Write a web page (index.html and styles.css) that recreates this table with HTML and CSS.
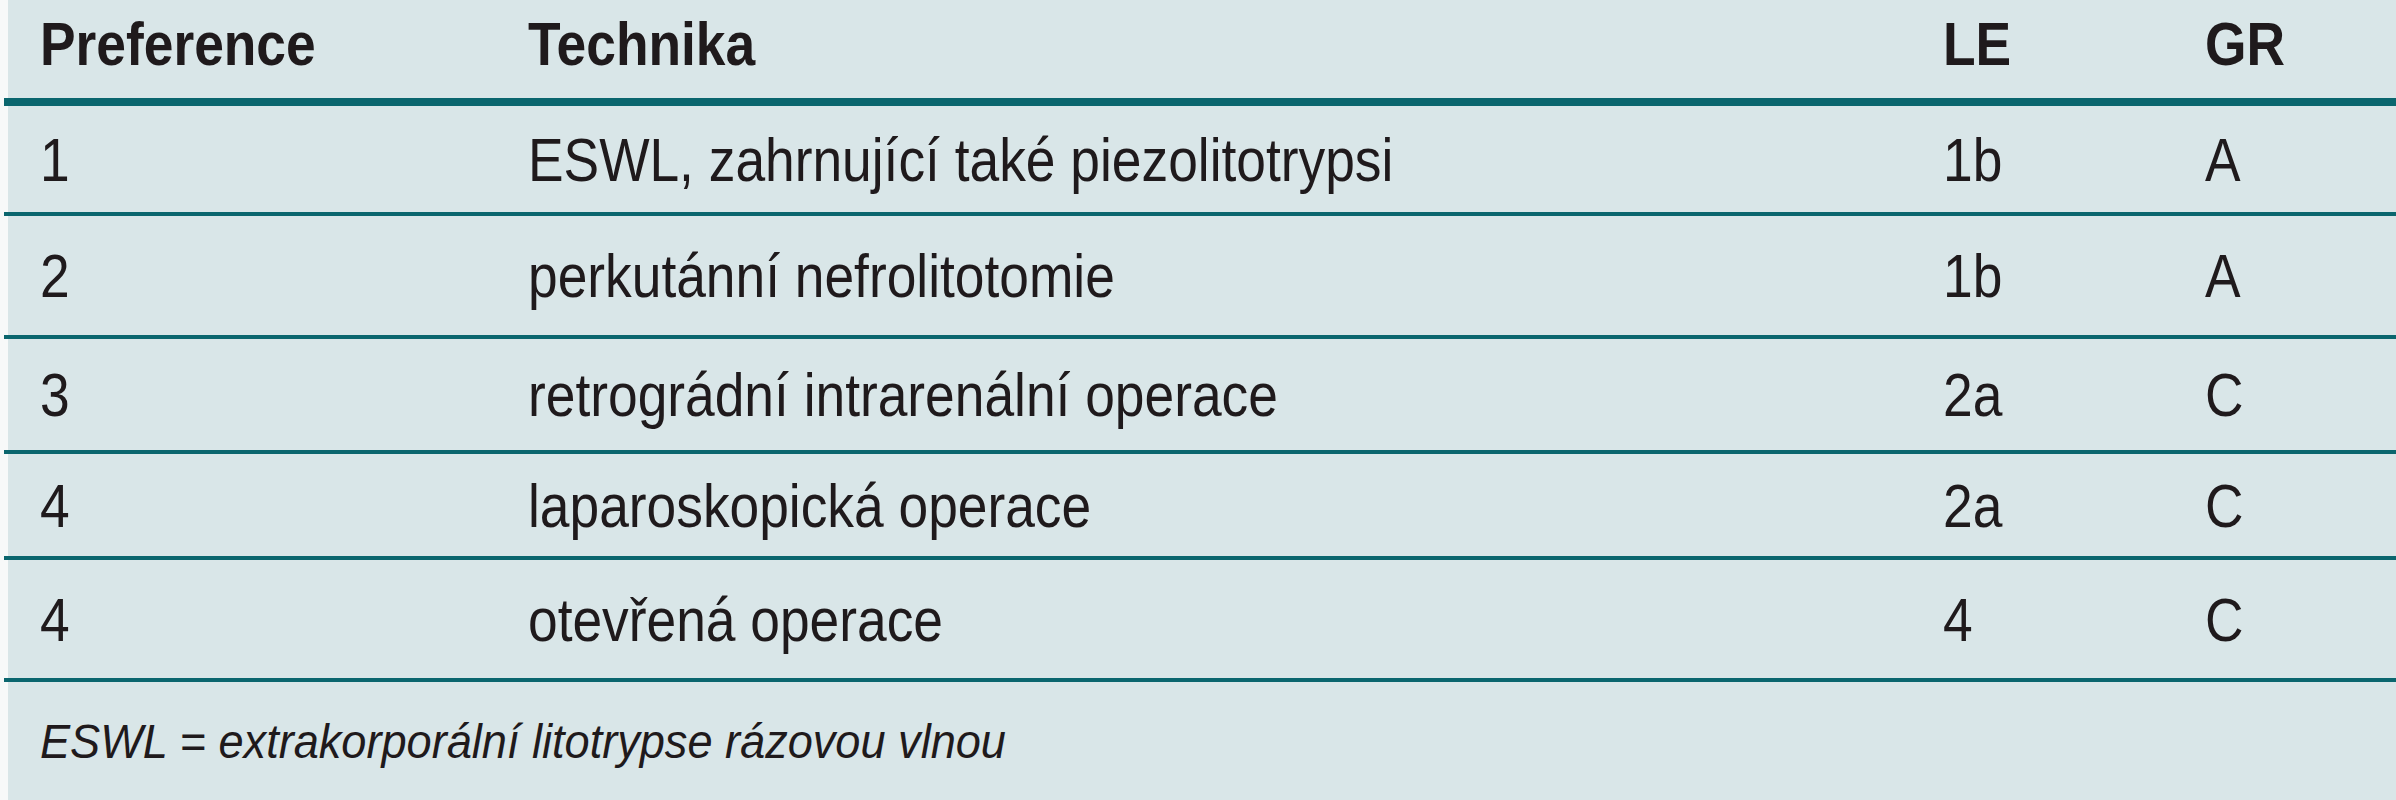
FILE: index.html
```html
<!DOCTYPE html>
<html lang="cs">
<head>
<meta charset="utf-8">
<title>Preference technik</title>
<link rel="stylesheet" href="styles.css">
</head>
<body>
<div class="table">
  <div class="row head">
    <div class="cell"><span class="t">Preference</span></div>
    <div class="cell"><span class="t">Technika</span></div>
    <div class="cell"><span class="t">LE</span></div>
    <div class="cell"><span class="t">GR</span></div>
  </div>
  <div class="row r1">
    <div class="cell"><span class="t">1</span></div>
    <div class="cell"><span class="t">ESWL, zahrnující také piezolitotrypsi</span></div>
    <div class="cell"><span class="t">1b</span></div>
    <div class="cell"><span class="t">A</span></div>
  </div>
  <div class="row r2">
    <div class="cell"><span class="t">2</span></div>
    <div class="cell"><span class="t">perkutánní nefrolitotomie</span></div>
    <div class="cell"><span class="t">1b</span></div>
    <div class="cell"><span class="t">A</span></div>
  </div>
  <div class="row r3">
    <div class="cell"><span class="t">3</span></div>
    <div class="cell"><span class="t">retrográdní intrarenální operace</span></div>
    <div class="cell"><span class="t">2a</span></div>
    <div class="cell"><span class="t">C</span></div>
  </div>
  <div class="row r4">
    <div class="cell"><span class="t">4</span></div>
    <div class="cell"><span class="t">laparoskopická operace</span></div>
    <div class="cell"><span class="t">2a</span></div>
    <div class="cell"><span class="t">C</span></div>
  </div>
  <div class="row r5">
    <div class="cell"><span class="t">4</span></div>
    <div class="cell"><span class="t">otevřená operace</span></div>
    <div class="cell"><span class="t">4</span></div>
    <div class="cell"><span class="t">C</span></div>
  </div>
  <div class="foot"><span class="ft">ESWL = extrakorporální litotrypse rázovou vlnou</span></div>
</div>
</body>
</html>
```

FILE: styles.css
```css
html, body {
  margin: 0;
  padding: 0;
  background: #f7f9f9;
}

.table {
  margin-left: 4px;
  height: 800px;
  font-family: "Liberation Sans", Arial, sans-serif;
  font-size: 62px;
  color: #1f1a1c;
  display: flex;
  flex-direction: column;
}

.row {
  display: grid;
  grid-template-columns: 488px 1415px 262px 1fr;
  align-items: center;
  padding-left: 36px;
  background: linear-gradient(to right, transparent 4px, #d9e6e8 4px);
  border-bottom: 4px solid #0a666e;
  white-space: nowrap;
}

.t {
  display: inline-block;
  transform: scaleX(0.86);
  transform-origin: left center;
}

.head {
  height: 86px;
  padding-bottom: 12px;
  border-bottom-width: 8px;
  font-weight: bold;
}

.r1 { height: 106px; }
.r2 { height: 119px; }
.r3 { height: 111px; }
.r4 { height: 102px; }
.r5 { height: 118px; }

.foot {
  flex: 1;
  display: flex;
  align-items: center;
  padding-left: 36px;
  background: linear-gradient(to right, transparent 4px, #d9e6e8 4px);
  font-style: italic;
  font-size: 48px;
  white-space: nowrap;
}

.ft {
  display: inline-block;
  transform: scaleX(0.94);
  transform-origin: left center;
}
```
